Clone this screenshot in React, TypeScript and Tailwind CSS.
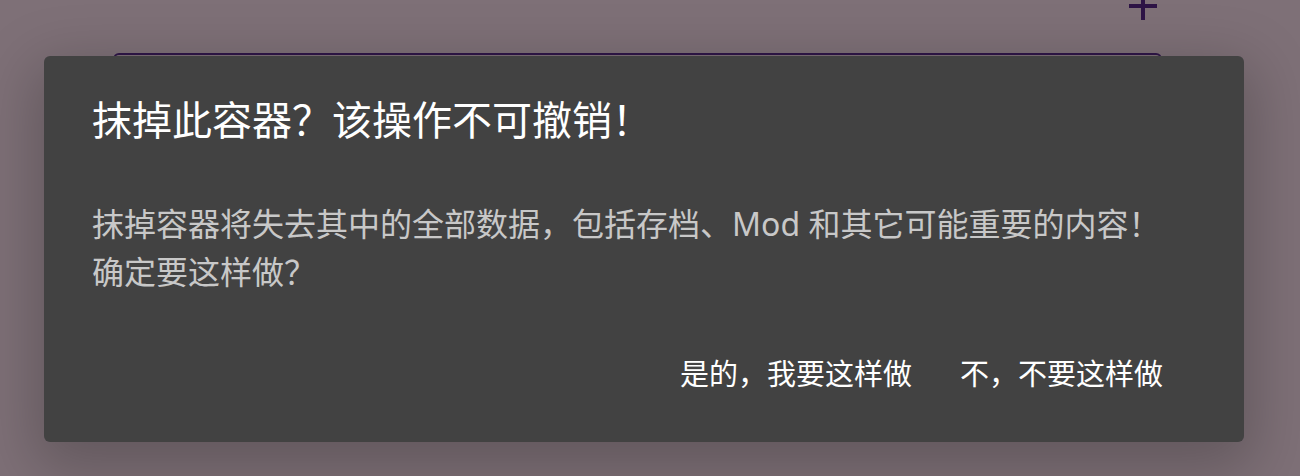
const cjk = { fontFamily: '"Noto Sans", "Noto Sans CJK SC", sans-serif' };

function PageBehind() {
  return (
    <div className="flex flex-col">
      <div className="flex h-[53px] justify-end pr-[143px]">
        <svg width="28" height="28" viewBox="0 0 28 28" className="-mt-[8px]">
          <path d="M14 0v28M0 14h28" stroke="#2e1446" strokeWidth="4" />
        </svg>
      </div>
      <div className="ml-[113px] mr-[138px] h-[380px] rounded-md border-2 border-[#2f1648]" />
    </div>
  );
}

function ConfirmDialog() {
  return (
    <div
      className="absolute left-[44px] top-[56px] flex w-[1200px] flex-col rounded-md bg-[#424242] shadow-[0_18px_60px_10px_rgba(0,0,0,0.22)]"
      style={cjk}
    >
      <h2 className="px-[48px] pt-[32px] text-[40px] leading-[64px] font-normal text-white">
        抹掉此容器？该操作不可撤销！
      </h2>
      <p className="mt-[48px] px-[48px] text-[32px] leading-[48px] text-[#c8c8c8]">
        抹掉容器将失去其中的全部数据，包括存档、Mod 和其它可能重要的内容！
        <br />
        确定要这样做？
      </p>
      <div className="mt-[42px] flex justify-end gap-[16px] pr-[65px] pb-[32px]">
        <button className="flex h-[72px] items-center rounded-md px-[16px] text-[29px] text-white">
          是的，我要这样做
        </button>
        <button className="flex h-[72px] items-center rounded-md px-[16px] text-[29px] text-white">
          不，不要这样做
        </button>
      </div>
    </div>
  );
}

export default function App() {
  return (
    <div className="relative h-[476px] w-[1300px] overflow-hidden bg-[#7e7077]">
      <PageBehind />
      <ConfirmDialog />
    </div>
  );
}
